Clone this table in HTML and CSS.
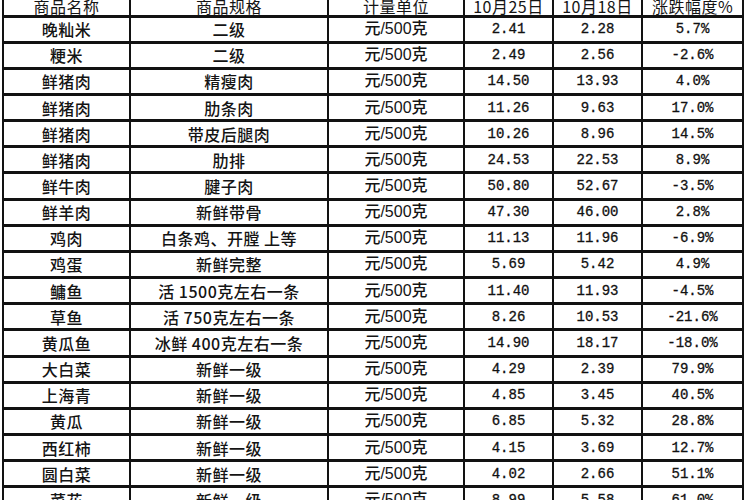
FILE: index.html
```html
<!DOCTYPE html>
<html lang="zh-CN">
<head>
<meta charset="utf-8">
<title>农产品价格表</title>
<link rel="stylesheet" href="styles.css">
</head>
<body>
<div class="sheet">
  <div class="c hd">商品名称</div><div class="c hd">商品规格</div><div class="c hd">计量单位</div><div class="c hd">10月25日</div><div class="c hd">10月18日</div><div class="c hd">涨跌幅度%</div>

  <div class="c">晚籼米</div><div class="c">二级</div><div class="c u">元/500克</div><div class="c n">2.41</div><div class="c n">2.28</div><div class="c n">5.7%</div>
  <div class="c">粳米</div><div class="c">二级</div><div class="c u">元/500克</div><div class="c n">2.49</div><div class="c n">2.56</div><div class="c n">-2.6%</div>
  <div class="c">鲜猪肉</div><div class="c">精瘦肉</div><div class="c u">元/500克</div><div class="c n">14.50</div><div class="c n">13.93</div><div class="c n">4.0%</div>
  <div class="c">鲜猪肉</div><div class="c">肋条肉</div><div class="c u">元/500克</div><div class="c n">11.26</div><div class="c n">9.63</div><div class="c n">17.0%</div>
  <div class="c">鲜猪肉</div><div class="c">带皮后腿肉</div><div class="c u">元/500克</div><div class="c n">10.26</div><div class="c n">8.96</div><div class="c n">14.5%</div>
  <div class="c">鲜猪肉</div><div class="c">肋排</div><div class="c u">元/500克</div><div class="c n">24.53</div><div class="c n">22.53</div><div class="c n">8.9%</div>
  <div class="c">鲜牛肉</div><div class="c">腱子肉</div><div class="c u">元/500克</div><div class="c n">50.80</div><div class="c n">52.67</div><div class="c n">-3.5%</div>
  <div class="c">鲜羊肉</div><div class="c">新鲜带骨</div><div class="c u">元/500克</div><div class="c n">47.30</div><div class="c n">46.00</div><div class="c n">2.8%</div>
  <div class="c">鸡肉</div><div class="c">白条鸡、开膛 上等</div><div class="c u">元/500克</div><div class="c n">11.13</div><div class="c n">11.96</div><div class="c n">-6.9%</div>
  <div class="c">鸡蛋</div><div class="c">新鲜完整</div><div class="c u">元/500克</div><div class="c n">5.69</div><div class="c n">5.42</div><div class="c n">4.9%</div>
  <div class="c">鳙鱼</div><div class="c">活 1500克左右一条</div><div class="c u">元/500克</div><div class="c n">11.40</div><div class="c n">11.93</div><div class="c n">-4.5%</div>
  <div class="c">草鱼</div><div class="c">活 750克左右一条</div><div class="c u">元/500克</div><div class="c n">8.26</div><div class="c n">10.53</div><div class="c n">-21.6%</div>
  <div class="c">黄瓜鱼</div><div class="c">冰鲜 400克左右一条</div><div class="c u">元/500克</div><div class="c n">14.90</div><div class="c n">18.17</div><div class="c n">-18.0%</div>
  <div class="c">大白菜</div><div class="c">新鲜一级</div><div class="c u">元/500克</div><div class="c n">4.29</div><div class="c n">2.39</div><div class="c n">79.9%</div>
  <div class="c">上海青</div><div class="c">新鲜一级</div><div class="c u">元/500克</div><div class="c n">4.85</div><div class="c n">3.45</div><div class="c n">40.5%</div>
  <div class="c">黄瓜</div><div class="c">新鲜一级</div><div class="c u">元/500克</div><div class="c n">6.85</div><div class="c n">5.32</div><div class="c n">28.8%</div>
  <div class="c">西红柿</div><div class="c">新鲜一级</div><div class="c u">元/500克</div><div class="c n">4.15</div><div class="c n">3.69</div><div class="c n">12.7%</div>
  <div class="c">圆白菜</div><div class="c">新鲜一级</div><div class="c u">元/500克</div><div class="c n">4.02</div><div class="c n">2.66</div><div class="c n">51.1%</div>
  <div class="c">菜花</div><div class="c">新鲜一级</div><div class="c u">元/500克</div><div class="c n">8.99</div><div class="c n">5.58</div><div class="c n">61.0%</div>
</div>
</body>
</html>
```

FILE: styles.css
```css
html, body {
  margin: 0;
  padding: 0;
  background: #ffffff;
}

body {
  width: 750px;
  height: 500px;
  overflow: hidden;
}

.sheet {
  margin-left: 2px;
  width: 742px;
  display: grid;
  grid-template-columns: 125px 196px 134px 87px 87px 99px;
  grid-template-rows: 14.5px;
  grid-auto-rows: 23.17px;
  column-gap: 2px;
  row-gap: 3px;
  padding: 0 2px 3px 2px;
  background: #121212;
  box-sizing: border-box;
}

.c {
  background: #ffffff;
  display: flex;
  align-items: center;
  justify-content: center;
  white-space: nowrap;
  overflow: hidden;
  font-family: "Noto Sans CJK SC", "Noto Sans CJK TC", sans-serif;
  font-size: 16px;
  font-weight: 500;
  letter-spacing: 0.5px;
  color: #141414;
  line-height: 1;
}

.hd {
  align-items: flex-end;
  line-height: 16px;
  font-weight: 400;
  padding-bottom: 1px;
  box-sizing: border-box;
}

.u {
  font-family: "Liberation Sans", "Noto Sans CJK SC", sans-serif;
  font-size: 16px;
  letter-spacing: 0;
}

.n {
  font-family: "Liberation Mono", "Noto Sans CJK SC", monospace;
  font-size: 14px;
  font-weight: 400;
  letter-spacing: 0;
  color: #111111;
  -webkit-text-stroke: 0.3px #111111;
}
```
